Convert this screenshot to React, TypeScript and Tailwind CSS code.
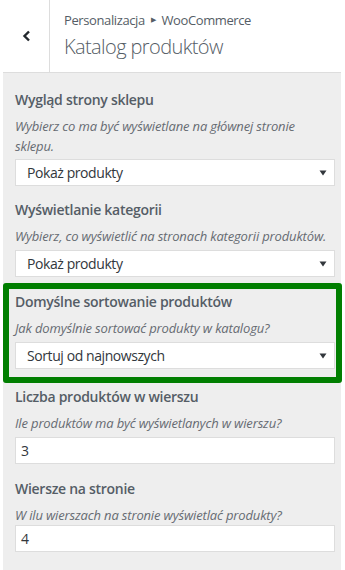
import React from "react";

const font = { fontFamily: '"Open Sans", "Noto Sans", sans-serif' };

function Arrow() {
  return (
    <svg width="8" height="6" viewBox="0 0 8 6" className="shrink-0">
      <path d="M0.5 0.5 L7.5 0.5 L4 5.5 Z" fill="#32373c" />
    </svg>
  );
}

function Select({ value }: { value: string }) {
  return (
    <div className="flex h-[27px] items-center justify-between border border-[#dddddd] bg-white pl-[11px] pr-[7px] text-[14px] tracking-[-0.03em] text-[#32373c]">
      <span>{value}</span>
      <Arrow />
    </div>
  );
}

function Input({ value }: { value: string }) {
  return (
    <div className="flex h-[27px] items-center border border-[#dddddd] bg-white pl-[5px] text-[14px] text-[#32373c]">
      <span>{value}</span>
    </div>
  );
}

function Title({ children }: { children: React.ReactNode }) {
  return <div className="text-[14px] font-semibold leading-5 tracking-[-0.02em] text-[#555d66]">{children}</div>;
}

function Desc({ children }: { children: React.ReactNode }) {
  return <div className="mt-[6px] text-[13px] italic leading-5 tracking-[-0.012em] text-[#666b72]">{children}</div>;
}

export default function App() {
  return (
    <div className="h-[570px] w-[345px] overflow-hidden bg-white pl-[3px] pr-[4px]" style={font}>
      <div className="flex h-[73px] border-b border-[#dddddd]">
        <div className="flex w-[47px] items-center justify-center border-r border-[#dddddd] pb-[1px] pl-[1px]">
          <svg width="10" height="12" viewBox="0 0 10 12">
            <path d="M7 1.5 L2.5 6 L7 10.5" fill="none" stroke="#23282d" strokeWidth="2.4" />
          </svg>
        </div>
        <div className="flex flex-col pl-[14px] pt-[10px]">
          <div className="flex items-center text-[13px] leading-5 tracking-[-0.03em] text-[#555d66]">
            <span>Personalizacja</span>
            <span className="mx-[6px] text-[7px]">▶</span>
            <span>WooCommerce</span>
          </div>
          <div className="mt-[3px] text-[20px] font-light leading-7 tracking-[-0.03em] text-[#555d66]">Katalog produktów</div>
        </div>
      </div>
      <div className="h-[497px] bg-[#eeeeee] pl-[12px] pr-[6px] pt-[17px]">
        <Title>Wygląd strony sklepu</Title>
        <Desc>Wybierz co ma być wyświetlane na głównej stronie sklepu.</Desc>
        <div className="mt-[3px]">
          <Select value="Pokaż produkty" />
        </div>

        <div className="mt-[14px]">
          <Title>Wyświetlanie kategorii</Title>
          <Desc>Wybierz, co wyświetlić na stronach kategorii produktów.</Desc>
          <div className="mt-[4px]">
            <Select value="Pokaż produkty" />
          </div>
        </div>

        <div className="-ml-[12px] -mr-[7px] mt-[6px] rounded-[3px] border-[6px] border-[#017f01] pb-[8px] pl-[6px] pr-[1px] pt-[3px]">
          <Title>Domyślne sortowanie produktów</Title>
          <Desc>Jak domyślnie sortować produkty w katalogu?</Desc>
          <div className="mt-[4px]">
            <Select value="Sortuj od najnowszych" />
          </div>
        </div>

        <div className="mt-[4px]">
          <Title>Liczba produktów w wierszu</Title>
          <Desc>Ile produktów ma być wyświetlanych w wierszu?</Desc>
          <div className="mt-[4px]">
            <Input value="3" />
          </div>
        </div>

        <div className="mt-[15px]">
          <Title>Wiersze na stronie</Title>
          <Desc>W ilu wierszach na stronie wyświetlać produkty?</Desc>
          <div className="mt-0">
            <Input value="4" />
          </div>
        </div>
      </div>
    </div>
  );
}
